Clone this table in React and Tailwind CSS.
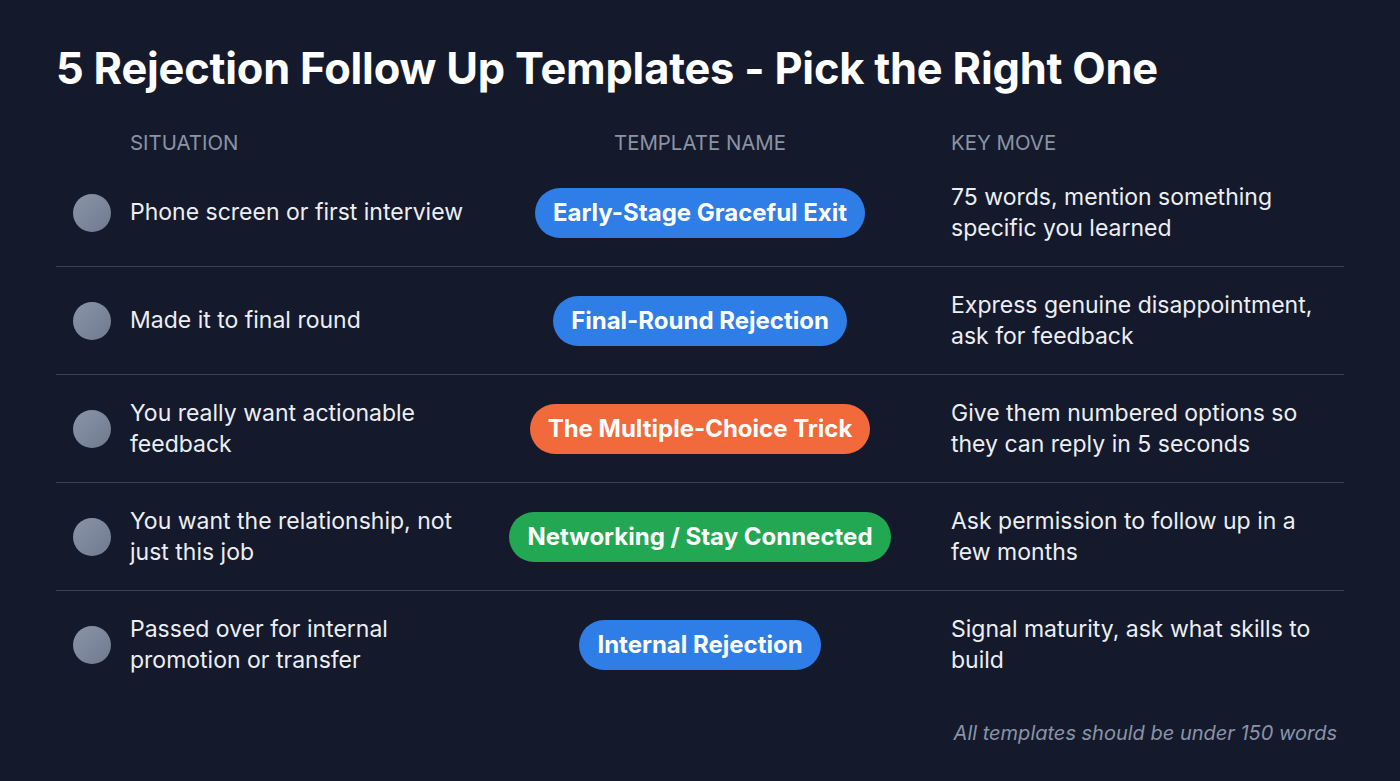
import React from "react";

const rows = [
  { s: "Phone screen or first interview", t: "Early-Stage Graceful Exit", c: "bg-[#2f7de6]", k: "75 words, mention something specific you learned" },
  { s: "Made it to final round", t: "Final-Round Rejection", c: "bg-[#2f7de6]", k: "Express genuine disappointment, ask for feedback" },
  { s: "You really want actionable feedback", t: "The Multiple-Choice Trick", c: "bg-[#f26a3b]", k: "Give them numbered options so they can reply in 5 seconds" },
  { s: "You want the relationship, not just this job", t: "Networking / Stay Connected", c: "bg-[#22a853]", k: "Ask permission to follow up in a few months" },
  { s: "Passed over for internal promotion or transfer", t: "Internal Rejection", c: "bg-[#2f7de6]", k: "Signal maturity, ask what skills to build" },
];

export default function App() {
  return (
    <div
      className="w-[1400px] h-[781px] overflow-hidden bg-[#141a2b] px-[56px] text-[#eef0f4]"
      style={{ fontFamily: "Inter, 'Noto Sans', sans-serif" }}
    >
      <h1 className="pt-[42px] text-[43.4px] leading-[52px] font-bold tracking-[-0.2px] text-white">
        5 Rejection Follow Up Templates - Pick the Right One
      </h1>
      <div className="mt-[33px] grid grid-cols-[74px_340px_460px_1fr] h-[32px] items-center text-[20.4px] text-[#8b93a5]">
        <div />
        <div>SITUATION</div>
        <div className="text-center">TEMPLATE NAME</div>
        <div className="pl-[21px]">KEY MOVE</div>
      </div>
      <div>
        {rows.map((r, i) => (
          <div
            key={i}
            className={`grid grid-cols-[74px_340px_460px_1fr] h-[108px] items-center ${i < rows.length - 1 ? "border-b border-[#3a4254]" : ""}`}
          >
            <div className="pl-[17px]">
              <div className="w-[38px] h-[38px] rounded-full bg-gradient-to-br from-[#8a94a9] to-[#6f7a90]" />
            </div>
            <div className="text-[23px] leading-[31px] text-[#eceef3]">{r.s}</div>
            <div className="flex justify-center">
              <span className={`${r.c} rounded-full h-[50px] px-[18px] flex items-center text-[24px] font-bold text-white whitespace-nowrap`}>
                {r.t}
              </span>
            </div>
            <div className="pl-[21px] max-w-[393px] text-[23px] leading-[31px] text-[#eceef3]">{r.k}</div>
          </div>
        ))}
      </div>
      <div className="mt-[19px] text-right pr-[7px] text-[20px] italic text-[#8b93a8]">
        All templates should be under 150 words
      </div>
    </div>
  );
}
